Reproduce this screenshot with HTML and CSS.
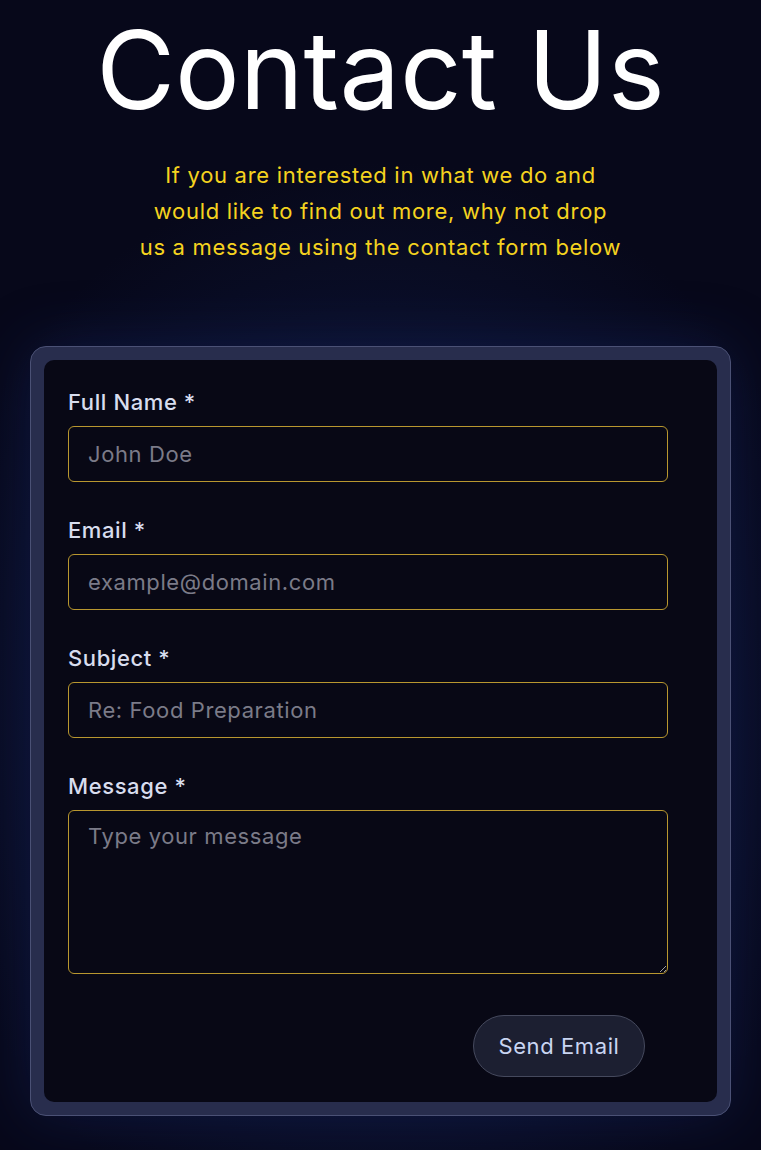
FILE: index.html
```html
<!DOCTYPE html>
<html lang="en">
<head>
<meta charset="utf-8">
<title>Contact Us</title>
<link rel="stylesheet" href="styles.css">
</head>
<body>
<main class="page">
  <header class="hero">
    <h1 class="title">Contact Us</h1>
    <p class="lead">If you are interested in what we do and<br>would like to find out more, why not drop<br>us a message using the contact form below</p>
  </header>
  <section class="card">
    <form class="form">
      <div class="field">
        <label class="label" for="name">Full Name *</label>
        <input class="input" id="name" type="text" placeholder="John Doe">
      </div>
      <div class="field">
        <label class="label" for="email">Email *</label>
        <input class="input" id="email" type="email" placeholder="example@domain.com">
      </div>
      <div class="field">
        <label class="label" for="subject">Subject *</label>
        <input class="input" id="subject" type="text" placeholder="Re: Food Preparation">
      </div>
      <div class="field">
        <label class="label" for="message">Message *</label>
        <textarea class="input textarea" id="message" placeholder="Type your message"></textarea>
      </div>
      <div class="actions">
        <button class="button" type="button">Send Email</button>
      </div>
    </form>
  </section>
</main>
</body>
</html>
```

FILE: styles.css
```css
* { box-sizing: border-box; }
html, body { margin: 0; padding: 0; }
body {
  background: #07081a;
  font-family: Inter, "Open Sans", sans-serif;
  color: #fff;
  height: 1150px;
  overflow: hidden;
}
.page {
  padding: 0 30px;
  background: radial-gradient(ellipse 62% 48% at 50% 62%, #111a3e 0%, #0c1230 55%, #07081a 100%);
  min-height: 1150px;
}
.hero { text-align: center; }
.title {
  margin: 0;
  padding-top: 5px;
  font-size: 108px;
  font-weight: 400;
  line-height: 130px;
  letter-spacing: 0;
  color: #ffffff;
}
.lead {
  margin: 22px 0 0;
  font-size: 22px;
  line-height: 36px;
  letter-spacing: 0.7px;
  color: #f5d31f;
}
.card {
  margin-top: 81px;
  padding: 13px;
  border: 1px solid #4b5175;
  border-radius: 16px;
  background: #282d4d;
  box-shadow: 0 0 60px rgba(25, 45, 120, 0.35);
}
.form {
  background: #080815;
  border-radius: 10px;
  padding: 27px 48px 25px 24px;
  display: flex;
  flex-direction: column;
}
.field {
  display: flex;
  flex-direction: column;
  gap: 9px;
  margin-bottom: 33px;
}
.label {
  font-size: 22px;
  line-height: 30px;
  letter-spacing: 0.6px;
  color: #d8ddee;
  font-weight: 500;
}
.input {
  width: 600px;
  height: 56px;
  background: #080815;
  border: 1px solid #b8972f;
  border-radius: 6px;
  padding: 0 19px;
  font-family: inherit;
  font-size: 22px;
  letter-spacing: 0.6px;
  color: #fff;
  outline: none;
}
.input::placeholder { color: #7b7b88; }
.textarea {
  height: 164px;
  padding-top: 12px;
  resize: vertical;
  display: block;
}
.actions {
  display: flex;
  justify-content: flex-end;
  padding-top: 8px;
  padding-right: 24px;
}
.button {
  width: 172px;
  height: 62px;
  border-radius: 31px;
  border: 1px solid #45495d;
  background: #1c1f31;
  color: #c9d5f2;
  font-family: inherit;
  font-size: 22px;
  letter-spacing: 0.6px;
}
```
